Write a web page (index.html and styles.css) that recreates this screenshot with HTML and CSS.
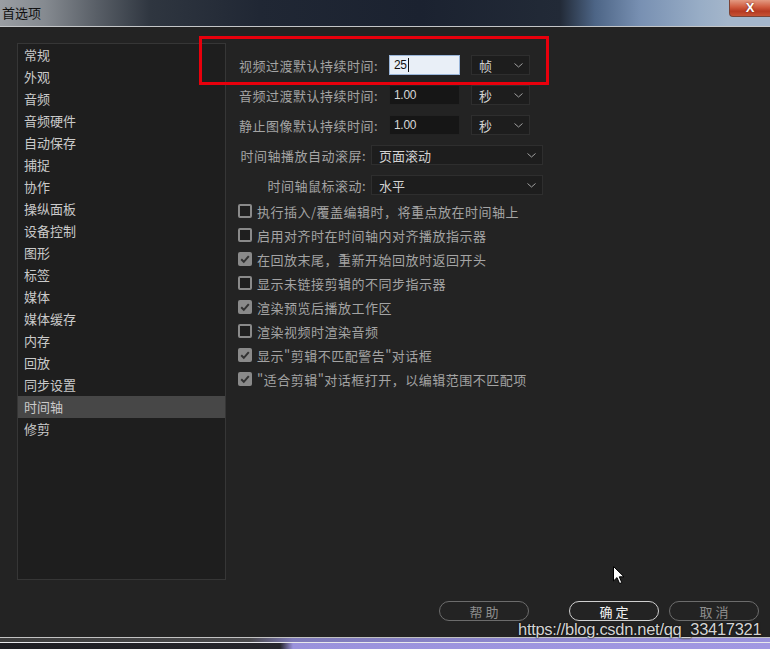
FILE: index.html
```html
<!DOCTYPE html>
<html lang="zh-CN">
<head>
<meta charset="utf-8">
<title>首选项</title>
<link rel="stylesheet" href="styles.css">
</head>
<body>
<div class="window">
  <div class="titlebar">
    <span class="title">首选项</span>
    <div class="close">X</div>
  </div>
  <div class="dialog">
    <div class="main">
      <ul class="sidebar">
        <li>常规</li>
        <li>外观</li>
        <li>音频</li>
        <li>音频硬件</li>
        <li>自动保存</li>
        <li>捕捉</li>
        <li>协作</li>
        <li>操纵面板</li>
        <li>设备控制</li>
        <li>图形</li>
        <li>标签</li>
        <li>媒体</li>
        <li>媒体缓存</li>
        <li>内存</li>
        <li>回放</li>
        <li>同步设置</li>
        <li class="active">时间轴</li>
        <li>修剪</li>
      </ul>
      <div class="content">
        <div class="form">
          <div class="field">
            <span class="label">视频过渡默认持续时间:</span>
            <div class="input focus">25<span class="caret"></span></div>
            <div class="select small"><span>帧</span><svg class="chev" width="9" height="5" viewBox="0 0 9 5"><path d="M0.5 0.5 L4.5 4 L8.5 0.5" fill="none" stroke="#a0a0a0" stroke-width="1"/></svg></div>
          </div>
          <div class="field">
            <span class="label">音频过渡默认持续时间:</span>
            <div class="input">1.00</div>
            <div class="select small"><span>秒</span><svg class="chev" width="9" height="5" viewBox="0 0 9 5"><path d="M0.5 0.5 L4.5 4 L8.5 0.5" fill="none" stroke="#a0a0a0" stroke-width="1"/></svg></div>
          </div>
          <div class="field">
            <span class="label">静止图像默认持续时间:</span>
            <div class="input">1.00</div>
            <div class="select small"><span>秒</span><svg class="chev" width="9" height="5" viewBox="0 0 9 5"><path d="M0.5 0.5 L4.5 4 L8.5 0.5" fill="none" stroke="#a0a0a0" stroke-width="1"/></svg></div>
          </div>
          <div class="field wide">
            <span class="label">时间轴播放自动滚屏:</span>
            <div class="select large"><span>页面滚动</span><svg class="chev" width="9" height="5" viewBox="0 0 9 5"><path d="M0.5 0.5 L4.5 4 L8.5 0.5" fill="none" stroke="#a0a0a0" stroke-width="1"/></svg></div>
          </div>
          <div class="field wide">
            <span class="label">时间轴鼠标滚动:</span>
            <div class="select large"><span>水平</span><svg class="chev" width="9" height="5" viewBox="0 0 9 5"><path d="M0.5 0.5 L4.5 4 L8.5 0.5" fill="none" stroke="#a0a0a0" stroke-width="1"/></svg></div>
          </div>
        </div>
        <ul class="checks">
          <li><span class="box"></span>执行插入/覆盖编辑时，将重点放在时间轴上</li>
          <li><span class="box"></span>启用对齐时在时间轴内对齐播放指示器</li>
          <li><span class="box on"><svg width="14" height="14" viewBox="0 0 14 14"><path d="M3.2 7.2 L5.8 9.8 L10.8 4.2" fill="none" stroke="#333" stroke-width="2"/></svg></span>在回放末尾，重新开始回放时返回开头</li>
          <li><span class="box"></span>显示未链接剪辑的不同步指示器</li>
          <li><span class="box on"><svg width="14" height="14" viewBox="0 0 14 14"><path d="M3.2 7.2 L5.8 9.8 L10.8 4.2" fill="none" stroke="#333" stroke-width="2"/></svg></span>渲染预览后播放工作区</li>
          <li><span class="box"></span>渲染视频时渲染音频</li>
          <li><span class="box on"><svg width="14" height="14" viewBox="0 0 14 14"><path d="M3.2 7.2 L5.8 9.8 L10.8 4.2" fill="none" stroke="#333" stroke-width="2"/></svg></span>显示"剪辑不匹配警告"对话框</li>
          <li><span class="box on"><svg width="14" height="14" viewBox="0 0 14 14"><path d="M3.2 7.2 L5.8 9.8 L10.8 4.2" fill="none" stroke="#333" stroke-width="2"/></svg></span>"适合剪辑"对话框打开，以编辑范围不匹配项</li>
        </ul>
      </div>
    </div>
    <div class="footer">
      <div class="btn help">帮助</div>
      <div class="btn ok">确定</div>
      <div class="btn">取消</div>
    </div>
  </div>
  <div class="taskbar">
    <div class="tb1"></div>
    <div class="tb2"></div>
  </div>
  <div class="highlight"></div>
  <div class="watermark">https://blog.csdn.net/qq_33417321</div>
  <svg class="cursor" width="13" height="19" viewBox="0 0 13 19"><path d="M0.5 0.5 L0.5 15 L4 11.6 L6.6 17.6 L8.8 16.6 L6.3 10.8 L11 10.8 Z" fill="#fff" stroke="#000" stroke-width="1"/></svg>
</div>
</body>
</html>
```
FILE: styles.css
```css
html, body {
  margin: 0;
  padding: 0;
  background: #232323;
}
body {
  font-family: "Noto Sans CJK SC", "Noto Sans", sans-serif;
}
.window {
  position: relative;
  width: 770px;
  height: 649px;
  overflow: hidden;
  display: flex;
  flex-direction: column;
}
.titlebar {
  height: 26px;
  flex: none;
  border-bottom: 1px solid #c4c6c8;
  display: flex;
  justify-content: space-between;
  align-items: flex-start;
  background: linear-gradient(90deg, #9a9ea3 0, #858a90 45px, #5a6068 95px, #2f3640 150px, #202734 260px, #1b2230 420px, #222a37 560px, #4d6586 595px, #7890b2 640px, #98adc6 700px, #a4b6cb 728px);
}
.title {
  font-size: 13px;
  color: #111;
  padding-left: 2px;
  line-height: 26px;
}
.close {
  width: 41px;
  height: 17px;
  box-sizing: border-box;
  border: 1px solid #7a4336;
  border-top: none;
  border-right: none;
  border-radius: 0 0 0 4px;
  background: linear-gradient(#e39a82, #cf5a3e 45%, #b63a22 70%, #c65234);
  color: #fff;
  font: bold 13px "Liberation Sans", sans-serif;
  text-align: center;
  line-height: 16px;
  text-shadow: 0 0 2px #6b2010;
}
.dialog {
  flex: 1;
  display: flex;
  flex-direction: column;
  background: #232323;
}
.main {
  display: flex;
  padding-top: 16px;
}
.sidebar {
  list-style: none;
  margin: 0 0 0 17px;
  padding: 0;
  width: 207px;
  height: 535px;
  border: 1px solid #363636;
  background: #1e1e1e;
  flex: none;
}
.sidebar li {
  height: 22px;
  line-height: 21px;
  padding-left: 6px;
  font-size: 13px;
  color: #cacaca;
}
.sidebar li.active {
  background: #474747;
}
.content {
  padding: 12px 0 0 13px;
}
.form {
  display: flex;
  flex-direction: column;
  gap: 10px;
}
.field {
  display: flex;
  align-items: center;
  height: 20px;
}
.label {
  width: 150px;
  flex: none;
  font-size: 13px;
  letter-spacing: 0.5px;
  color: #a4a4a4;
  white-space: nowrap;
}
.field.wide .label {
  width: 132px;
  text-align: right;
  padding-right: 5px;
  box-sizing: border-box;
}
.input {
  width: 71px;
  height: 20px;
  box-sizing: border-box;
  background: #161616;
  border: 1px solid #222;
  color: #d8d8d8;
  font: 12px "Liberation Sans", sans-serif;
  letter-spacing: -0.3px;
  line-height: 18px;
  padding-left: 4px;
  display: flex;
  align-items: center;
}
.input.focus {
  background: #e9eff7;
  border: 1px solid #9ab6da;
  color: #111;
}
.caret {
  display: inline-block;
  width: 1px;
  height: 14px;
  background: #111;
  margin-left: 1px;
}
.select {
  height: 20px;
  box-sizing: border-box;
  background: #1d1d1d;
  border: 1px solid #2e2e2e;
  display: flex;
  align-items: center;
  justify-content: space-between;
  padding: 0 6px 0 7px;
  font-size: 13px;
  color: #d2d2d2;
}
.select.small {
  width: 59px;
  margin-left: 11px;
}
.select.large {
  width: 172px;
}
.chev {
  display: block;
}
.checks {
  list-style: none;
  margin: 4px 0 0 -1px;
  padding: 0;
}
.checks li {
  height: 24px;
  display: flex;
  align-items: center;
  gap: 5px;
  font-size: 13px;
  letter-spacing: 0.5px;
  color: #a4a4a4;
  white-space: nowrap;
}
.box {
  width: 14px;
  height: 14px;
  box-sizing: border-box;
  border: 2px solid #8a8a8a;
  border-radius: 2px;
  background: #1f1f1f;
  flex: none;
}
.box.on {
  background: #8a8a8a;
  border: none;
}
.box svg {
  display: block;
}
.footer {
  display: flex;
  justify-content: flex-end;
  gap: 10px;
  padding-right: 11px;
  margin-top: 21px;
}
.btn {
  width: 90px;
  height: 20px;
  box-sizing: border-box;
  border: 1px solid #6c6c6c;
  border-radius: 10px;
  display: flex;
  align-items: center;
  justify-content: center;
  font-size: 13px;
  letter-spacing: 3px;
  text-indent: 3px;
  color: #8e8e8e;
}
.btn.help {
  margin-right: 30px;
}
.btn.ok {
  border-color: #cfcfcf;
  color: #f4f4f4;
}
.taskbar {
  flex: none;
  height: 11px;
  border-top: 1px solid #c2c2c2;
  display: flex;
  flex-direction: column;
}
.tb1 {
  height: 4px;
  background: linear-gradient(90deg, #3d3d3d 0, #4a4a4c 250px, #7f7bb8 293px, #8c86cc 500px, #9a93dc 770px);
}
.tb2 {
  flex: 1;
  border-top: 1px solid #e8e8ec;
  background: linear-gradient(90deg, #1d1d22 0, #26262c 280px, #9a92dc 293px, #a198e2 770px);
}
.highlight {
  position: absolute;
  left: 199px;
  top: 36px;
  width: 350px;
  height: 49px;
  box-sizing: border-box;
  border: 3px solid #e8000c;
}
.watermark {
  position: absolute;
  left: 518px;
  top: 621px;
  font: 16.5px "Liberation Sans", Arial, sans-serif;
  line-height: 17px;
  letter-spacing: -0.3px;
  color: #d4d4d4;
  text-shadow: 0 0 2px #111, 0 0 1px #000;
  white-space: nowrap;
}
.cursor {
  position: absolute;
  left: 613px;
  top: 566px;
}
```
